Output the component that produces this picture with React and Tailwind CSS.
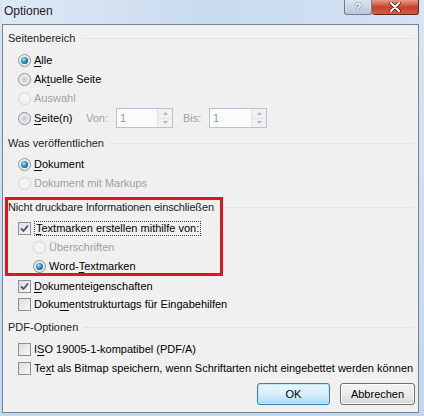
import React from 'react';

const Radio = ({ checked, disabled }) => (
  <span
    className={
      'flex h-[13px] w-[13px] shrink-0 items-center justify-center rounded-full border ' +
      (disabled
        ? 'border-[#d4d4d4] bg-[#f3f3f3]'
        : 'border-[#8c8f94] bg-[radial-gradient(circle_at_50%_50%,#bfc3c8_0%,#e2e4e7_45%,#f7f7f7_100%)]')
    }
  >
    {checked && (
      <span className="h-[7px] w-[7px] rounded-full bg-[radial-gradient(circle_at_40%_35%,#a8e6ff_0%,#2c8cc6_45%,#0c3f68_100%)]" />
    )}
  </span>
);

const Check = ({ checked }) => (
  <span className="flex h-[13px] w-[13px] shrink-0 items-center justify-center border border-[#8e8f8f] bg-gradient-to-br from-[#dcdcdc] to-[#f8f8f8]">
    {checked && (
      <svg width="11" height="11" viewBox="0 0 11 11">
        <path d="M2 5.5 L4.5 8 L9 2.5" fill="none" stroke="#3d518a" strokeWidth="1.8" />
      </svg>
    )}
  </span>
);

const Spin = ({ width }) => (
  <div className={'flex h-[20px] border border-[#b3c2d6] bg-[#fbfbfb] ' + width}>
    <span className="flex-1 pl-[3px] leading-[18px] text-[#9a9a9a]">1</span>
    <div className="flex w-[15px] flex-col border-l border-[#dfe3e8] bg-[#f1f1f1]">
      <span className="flex flex-1 items-center justify-center border-b border-[#e2e2e2]">
        <svg width="5" height="3" viewBox="0 0 5 3"><path d="M0 3 L2.5 0 L5 3 Z" fill="#b9b9b9" /></svg>
      </span>
      <span className="flex flex-1 items-center justify-center">
        <svg width="5" height="3" viewBox="0 0 5 3"><path d="M0 0 L2.5 3 L5 0 Z" fill="#b9b9b9" /></svg>
      </span>
    </div>
  </div>
);

const Group = ({ label, className = '' }) => (
  <div className={'flex h-[18px] items-center pl-[3px] text-[#1e1e1e] ' + className}>
    <span>{label}</span>
    <span className="ml-[6px] mr-[1px] h-px flex-1 bg-[#dde2e6]" />
  </div>
);

const U = ({ children }) => <span className="underline underline-offset-[2px]">{children}</span>;

const App = () => {
  return (
    <div className="flex h-[416px] w-[424px] flex-col bg-gradient-to-b from-[#d8e5f3] to-[#c4d7ed] pb-[3px] pl-[2px] pr-[5px] font-['Liberation_Sans',Arial,sans-serif] text-[11px] text-black">
      {/* Titelleiste */}
      <div className="flex h-[24px] shrink-0 items-start bg-gradient-to-r from-[#dfe9f5] via-[#c9daee] to-[#d4e2f2]">
        <span className="pl-[2px] pt-[2px] text-[12px] text-[#1b1b1b]">Optionen</span>
        <div className="ml-auto flex">
          <div className="flex h-[15px] w-[28px] items-center justify-center rounded-b-[3px] border border-t-0 border-[#6e7d92] bg-gradient-to-b from-[#dbe4ee] to-[#b9c8d9] text-[11px] font-bold leading-none text-white [text-shadow:0_0_2px_#2d3b4f]">
            ?
          </div>
          <div className="flex h-[15px] w-[47px] items-center justify-center rounded-b-[3px] border border-t-0 border-l-0 border-[#5a2a25] bg-gradient-to-b from-[#e89a86] via-[#c8412f] to-[#d85a42]">
            <svg width="12" height="10" viewBox="0 0 12 10">
              <path d="M2 1 L10 9 M10 1 L2 9" stroke="#3b1a16" strokeWidth="3.4" strokeLinecap="round" />
              <path d="M2 1 L10 9 M10 1 L2 9" stroke="#ffffff" strokeWidth="2" strokeLinecap="round" />
            </svg>
          </div>
        </div>
      </div>

      {/* Inhalt */}
      <div className="flex flex-1 flex-col border border-[#72849a] bg-[#f0f0f0] px-[2px] pt-[4px]">
        <Group label="Seitenbereich" />
        <div className="mt-[4px] flex h-[18px] items-center gap-[3px] pl-[13px]">
          <Radio checked />
          <span><U>A</U>lle</span>
        </div>
        <div className="mt-[1px] flex h-[18px] items-center gap-[3px] pl-[13px]">
          <Radio />
          <span>Ak<U>t</U>uelle Seite</span>
        </div>
        <div className="mt-[1px] flex h-[18px] items-center gap-[3px] pl-[13px] text-[#a0a0a0]">
          <Radio disabled />
          <span>Auswahl</span>
        </div>
        <div className="mt-[1px] flex h-[20px] items-center pl-[13px]">
          <Radio />
          <span className="ml-[3px] w-[52px]"><U>S</U>eite(n)</span>
          <span className="w-[30px] text-[#a0a0a0]">Von:</span>
          <Spin width="w-[57px]" />
          <span className="ml-[10px] w-[26px] text-[#a0a0a0]">Bis:</span>
          <Spin width="w-[58px]" />
        </div>

        <Group label="Was veröffentlichen" className="mt-[6px]" />
        <div className="mt-[3px] flex h-[18px] items-center gap-[3px] pl-[13px]">
          <Radio checked />
          <span><U>D</U>okument</span>
        </div>
        <div className="mt-[1px] flex h-[18px] items-center gap-[3px] pl-[13px] text-[#a0a0a0]">
          <Radio disabled />
          <span>Dokument mit Markups</span>
        </div>

        <div className="relative mt-[6px]">
          <Group label="Nicht druckbare Informationen einschließen" className="tracking-[-0.15px]" />
          <div className="mt-[3px] flex h-[18px] items-center gap-[3px] pl-[13px]">
            <Check checked />
            <span className="border border-dotted border-[#444] px-px leading-[13px]"><U>T</U>extmarken erstellen mithilfe von:</span>
          </div>
          <div className="mt-[1px] flex h-[18px] items-center gap-[3px] pl-[28px] text-[#a0a0a0]">
            <Radio disabled />
            <span>Überschriften</span>
          </div>
          <div className="mt-[1px] flex h-[18px] items-center gap-[3px] pl-[28px]">
            <Radio checked />
            <span>Word-<U>T</U>extmarken</span>
          </div>
          {/* rote Markierung */}
          <span className="pointer-events-none absolute -bottom-[1px] -top-[1px] left-0 w-[218px] border-[3px] border-[#e3141c]" />
        </div>

        <div className="mt-[2px] flex h-[18px] items-center gap-[3px] pl-[13px]">
          <Check checked />
          <span><U>D</U>okumenteigenschaften</span>
        </div>
        <div className="flex h-[18px] items-center gap-[3px] pl-[13px]">
          <Check />
          <span>Doku<U>m</U>entstrukturtags für Eingabehilfen</span>
        </div>

        <Group label="PDF-Optionen" className="mt-[5px]" />
        <div className="mt-[4px] flex h-[18px] items-center gap-[3px] pl-[13px]">
          <Check />
          <span>I<U>S</U>O 19005-1-kompatibel (PDF/A)</span>
        </div>
        <div className="mt-[1px] flex h-[18px] items-center gap-[3px] pl-[13px]">
          <Check />
          <span className="whitespace-nowrap">Te<U>x</U>t als Bitmap speichern, wenn Schriftarten nicht eingebettet werden können</span>
        </div>

        <div className="mr-[1px] mt-[6px] flex justify-end gap-[10px]">
          <button className="h-[22px] w-[73px] rounded-[3px] border border-[#3c7fb1] bg-gradient-to-b from-[#eaf6fd] via-[#d9f0fc] to-[#a7d9f5] shadow-[inset_0_0_0_1px_#bfe6fa]">
            OK
          </button>
          <button className="h-[22px] w-[75px] rounded-[3px] border border-[#707070] bg-gradient-to-b from-[#f2f2f2] via-[#ebebeb] to-[#d6d6d6] shadow-[inset_0_0_0_1px_#fcfcfc]">
            Abbrechen
          </button>
        </div>
      </div>
    </div>
  );
};

export default App;
